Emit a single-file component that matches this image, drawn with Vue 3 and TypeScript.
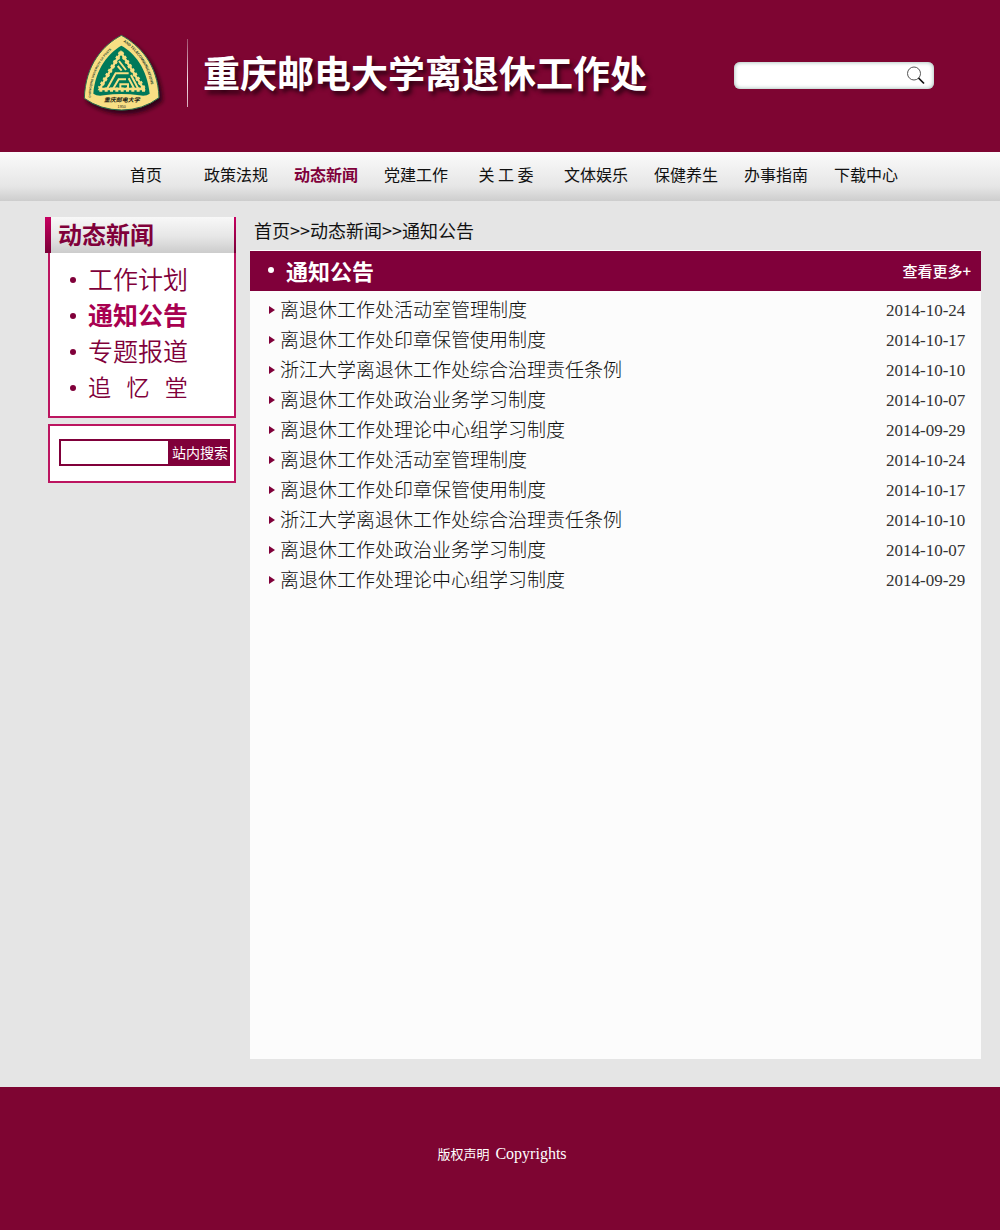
<script setup lang="ts">
import { ref } from 'vue'

interface Notice {
  title: string
  date: string
}

const navItems: string[] = ['首页', '政策法规', '动态新闻', '党建工作', '关 工 委', '文体娱乐', '保健养生', '办事指南', '下载中心']
const activeNav = '动态新闻'

const sideItems: string[] = ['工作计划', '通知公告', '专题报道', '追\u00a0\u00a0\u00a0忆\u00a0\u00a0\u00a0堂']
const activeSide = '通知公告'

const latest: Notice[] = [
  { title: '离退休工作处活动室管理制度', date: '2014-10-24' },
  { title: '离退休工作处印章保管使用制度', date: '2014-10-17' },
  { title: '浙江大学离退休工作处综合治理责任条例', date: '2014-10-10' },
  { title: '离退休工作处政治业务学习制度', date: '2014-10-07' },
  { title: '离退休工作处理论中心组学习制度', date: '2014-09-29' },
]
const notices: Notice[] = [...latest, ...latest]

const siteQuery = ref('')
const topQuery = ref('')
</script>

<template>
  <div class="page">
    <header class="banner">
      <svg class="logo" viewBox="0 0 390 300" width="130" height="100" role="img" aria-label="校徽">
        <defs>
          <filter id="logo-shadow" x="-20%" y="-20%" width="150%" height="150%">
            <feDropShadow dx="9" dy="11" stdDeviation="7" flood-color="#1c000c" flood-opacity="0.8" />
          </filter>
          <path id="arc-left" d="M62 218 C64 134 104 84 160 46" />
          <path id="arc-right" d="M160 50 C206 84 244 132 248 222" />
        </defs>
        <path
          d="M154 31 C100 60 46 118 43 220 Q92 255 155 255 Q218 255 267 218 C264 118 208 60 154 31Z"
          fill="#f8df84" stroke="#2c6b4c" stroke-width="3" filter="url(#logo-shadow)"
        />
        <path d="M154 62 C118 82 76 130 70 206 Q82 215 102 211 Q154 203 208 211 Q228 215 239 206 C232 130 192 82 154 62Z" fill="#00795a" />
        <g fill="none" stroke="#f8df84">
          <path d="M153 82 L89 190 M153 82 L221 190" stroke-width="13" stroke-dasharray="8 7" />
          <path d="M153 82 L89 192 H221 Z" stroke-width="7" />
          <path d="M88 194 H226" stroke-width="13" stroke-dasharray="9 7" />
          <path d="M112 190 L137 145 H176 M130 190 L146 163 H168 M151 192 V178 H174 V192" stroke-width="6" />
          <path d="M147 108 L168 135 M143 123 L155 137 M183 150 L204 190 M176 160 L192 190" stroke-width="6" />
        </g>
        <g font-family="'Liberation Sans', sans-serif" font-weight="700" fill="#21402c">
          <text font-size="9"><textPath href="#arc-left">CHONGQING UNIVERSITY OF POSTS</textPath></text>
          <text font-size="11"><textPath href="#arc-right">AND TELECOMMUNICATIONS</textPath></text>
        </g>
        <text x="155" y="231" text-anchor="middle" font-family="'Noto Sans CJK SC', sans-serif" font-weight="700" font-style="italic" font-size="18" fill="#1d2418">重庆邮电大学</text>
        <text x="155" y="249" text-anchor="middle" font-family="'Liberation Sans', sans-serif" font-size="11" fill="#1d2418">1950</text>
      </svg>
      <span class="divider" aria-hidden="true"></span>
      <h1 class="site-title">重庆邮电大学离退休工作处</h1>
      <form class="top-search" role="search" @submit.prevent>
        <input v-model="topQuery" type="text" aria-label="搜索">
        <button type="submit" aria-label="提交搜索">
          <svg viewBox="0 0 20 20" width="20" height="20" fill="none" aria-hidden="true">
            <circle cx="8" cy="8.500" r="6.500" stroke="#444" stroke-width="0.900" />
            <path d="M12.500 13 L18 18.500" stroke="#111" stroke-width="1.700" />
          </svg>
        </button>
      </form>
    </header>

    <nav class="main-nav" aria-label="主导航">
      <a v-for="item in navItems" :key="item" href="#" :class="{ active: item === activeNav }">{{ item }}</a>
    </nav>

    <div class="content">
      <aside class="sidebar">
        <h2 class="side-title">动态新闻</h2>
        <ul class="side-menu">
          <li v-for="item in sideItems" :key="item" :class="{ active: item === activeSide }">
            <a href="#">{{ item }}</a>
          </li>
        </ul>
        <form class="site-search" @submit.prevent>
          <input v-model="siteQuery" type="text" aria-label="站内搜索">
          <button type="submit">站内搜索</button>
        </form>
      </aside>

      <main class="main">
        <div class="crumbs"><a href="#">首页</a>&gt;&gt;<a href="#">动态新闻</a>&gt;&gt;<a href="#">通知公告</a></div>
        <section class="panel">
          <div class="panel-head">
            <h2>通知公告</h2>
            <a href="#">查看更多+</a>
          </div>
          <ul class="notices">
            <li v-for="(notice, i) in notices" :key="i">
              <a href="#">{{ notice.title }}</a>
              <time :datetime="notice.date">{{ notice.date }}</time>
            </li>
          </ul>
        </section>
      </main>
    </div>

    <footer class="footer">
      <span>版权声明</span>
      <span class="latin">Copyrights</span>
    </footer>
  </div>
</template>

<style>
body {
  margin: 0;
  background: #e5e5e5;
}
</style>

<style scoped>
.page {
  display: flex;
  flex-direction: column;
  min-height: 100vh;
  font-family: 'Noto Sans CJK SC', sans-serif;
  color: #111;
}

a {
  color: inherit;
  text-decoration: none;
}

h1,
h2,
ul {
  margin: 0;
  padding: 0;
}

ul {
  list-style: none;
}

input,
button {
  box-sizing: border-box;
  margin: 0;
  padding: 0;
  border: 0;
  border-radius: 0;
  font-family: inherit;
  outline: 0;
}

button {
  cursor: pointer;
}

.banner {
  display: flex;
  align-items: center;
  box-sizing: border-box;
  min-height: 152px;
  padding: 0 66px 2px 70px;
  background: #7e0532;
}

.logo {
  flex: none;
  margin-right: -13px;
}

.divider {
  width: 1px;
  height: 68px;
  margin: 0 15px 4px 0;
  background: linear-gradient(#a0506e, #f4dce4 60%, #d9a9ba);
}

.site-title {
  padding-bottom: 6px;
  font-size: 37px;
  line-height: 48px;
  font-weight: 700;
  color: #fff;
  white-space: nowrap;
  text-shadow: 3px 4px 4px rgba(30, 0, 12, 0.8);
}

.top-search {
  display: flex;
  align-items: center;
  box-sizing: border-box;
  width: 200px;
  height: 27px;
  margin-left: auto;
  padding: 0 8px;
  border-radius: 6px;
  background: #fff;
  box-shadow: inset 0 0 4px #8fb0a8;
}

.top-search input {
  flex: 1;
  min-width: 0;
  height: 23px;
  background: transparent;
  font-size: 14px;
}

.top-search button {
  display: flex;
  background: transparent;
}

.main-nav {
  display: grid;
  grid-template-columns: repeat(9, 1fr);
  padding: 0 89px 4px 101px;
  background: linear-gradient(#fbfbfb, #e6e6e6 70%, #cdcdcd);
}

.main-nav a {
  font-size: 16px;
  line-height: 45px;
  text-align: center;
  white-space: nowrap;
}

.main-nav .active {
  font-weight: 700;
  color: #80003a;
}

.content {
  display: flex;
  flex: 1;
  gap: 14px;
  padding: 16px 19px 28px 45px;
}

.sidebar {
  flex: none;
  width: 191px;
}

.side-title {
  border-left: 6px solid;
  border-right: 2px solid;
  border-image: linear-gradient(#c90062, #780036) 1;
  border-top: 0;
  border-bottom: 0;
  padding: 0 0 2px 7px;
  background: linear-gradient(#f8f8f8, #e6e6e6 55%, #cccccc);
  font-size: 24px;
  line-height: 34px;
  color: #80003a;
}

.side-menu,
.site-search {
  margin-left: 3px;
  border: 2px solid #bc1560;
  background: #fff;
}

.side-menu {
  border-top: 0;
  padding: 9px 0 10px 20px;
}

.side-menu li {
  display: flex;
  align-items: center;
  height: 36px;
  font-size: 25px;
  line-height: 32px;
  font-weight: 350;
  color: #80003a;
}

.side-menu li::before {
  content: '';
  width: 6px;
  height: 6px;
  margin-right: 12px;
  border-radius: 50%;
  background: #80003a;
}

.side-menu a {
  padding-bottom: 4px;
}

.side-menu li:last-child {
  font-size: 23px;
}

.side-menu .active a {
  font-weight: 700;
  color: #a80050;
}

.site-search {
  display: flex;
  margin-top: 6px;
  padding: 13px 4px 15px 9px;
}

.site-search input {
  flex: 1;
  min-width: 0;
  height: 27px;
  border: 2px solid #80003a;
  background: #fff;
  font-size: 14px;
}

.site-search button {
  width: 60px;
  height: 27px;
  padding-bottom: 2px;
  background: #80003a;
  color: #fff;
  font-size: 14px;
  white-space: nowrap;
}

.main {
  display: flex;
  flex: 1;
  flex-direction: column;
  min-width: 0;
}

.crumbs {
  padding: 0 0 7px 4px;
  font-size: 18px;
  line-height: 26px;
}

.panel {
  flex: 1;
  border-top: 1px solid #fff;
  background: #fcfcfc;
}

.panel-head {
  display: flex;
  align-items: center;
  justify-content: space-between;
  height: 40px;
  padding: 0 10px 0 18px;
  background: #80003a;
  color: #fff;
}

.panel-head h2 {
  display: flex;
  align-items: center;
  font-size: 22px;
  line-height: 36px;
  padding-bottom: 2px;
}

.panel-head h2::before {
  content: '';
  width: 6px;
  height: 6px;
  margin-right: 12px;
  border-radius: 50%;
  background: #fff;
}

.panel-head a {
  padding-bottom: 2px;
  font-size: 15px;
  font-weight: 500;
}

.notices {
  padding: 4px 14px 0 19px;
}

.notices li {
  display: flex;
  align-items: center;
  height: 30px;
  font-size: 19px;
  line-height: 28px;
  font-weight: 300;
}

.notices a {
  padding-bottom: 2px;
}

.notices li::before {
  content: '';
  margin-right: 5px;
  border: solid transparent;
  border-width: 4px 0 4px 6px;
  border-left-color: #80003a;
}

.notices time {
  width: 81px;
  margin-left: auto;
  padding-top: 2px;
  font-family: 'Liberation Serif', serif;
  font-size: 17px;
  font-weight: 400;
  color: #333;
  white-space: nowrap;
}

.footer {
  display: flex;
  align-items: center;
  justify-content: center;
  gap: 6px;
  box-sizing: border-box;
  min-height: 143px;
  padding: 0 0 10px 4px;
  background: #7e0532;
  color: #fff;
  font-size: 13px;
}

.latin {
  font-family: 'Liberation Serif', serif;
  font-size: 16px;
}
</style>
